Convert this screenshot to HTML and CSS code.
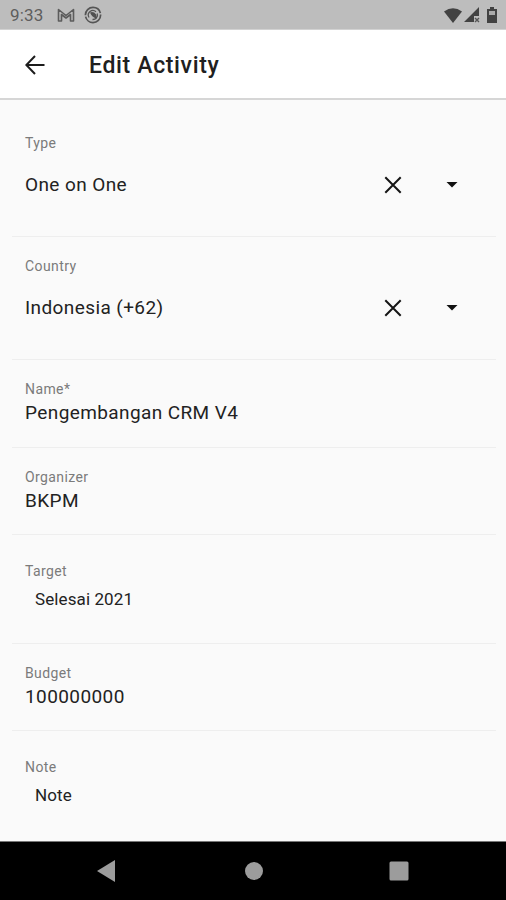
FILE: index.html
```
<!DOCTYPE html>
<html lang="en">
  <head>
    <meta charset="UTF-8" />
    <meta name="viewport" content="width=device-width, initial-scale=1.0" />
    <title>Edit Activity</title>
    <link rel="stylesheet" href="styles.css">
  </head>
  <body>
    <div class="status-bar">
      <span class="time">9:33</span>
      <svg class="mail-icon" width="18" height="14" viewBox="0 0 18 14">
        <path d="M1.5 13V1.5L9 7.5l7.5-6V13h-3V6.5L9 10 4.5 6.5V13z" fill="none" stroke="#5c5c5c" stroke-width="1.6" stroke-linejoin="round" />
      </svg>
      <svg class="app-icon" width="18" height="18" viewBox="0 0 18 18">
        <circle cx="9" cy="9" r="7.6" fill="none" stroke="#555" stroke-width="1.7" stroke-dasharray="22 1.5" />
        <path d="M5 11.5a4.6 4.6 0 0 1 7-5.8M13.2 7.5a4.6 4.6 0 0 1-4.7 6" fill="none" stroke="#555" stroke-width="1.3" />
        <path d="M6 6.5Q9.5 5 12.2 8.5L12.6 12.5Q8 11.5 6 6.5z" fill="#505050" />
      </svg>
      <div class="system-icons">
        <svg width="18" height="15" viewBox="0 0 18 15">
          <path d="M0 3.5Q9-3 18 3.5L9 15z" fill="#424242" />
        </svg>
        <svg class="signal" width="16" height="16" viewBox="0 0 16 16">
          <path d="M15 0v9h-5v6H0z" fill="#424242" />
          <path d="M11 11l4 4M15 11l-4 4" stroke="#555" stroke-width="1.4" />
        </svg>
        <svg class="battery" width="10" height="16" viewBox="0 0 10 16">
          <path d="M3 0h4v2h3v14H0V2h3z" fill="#424242" />
          <path d="M2 4h6v4H2z" fill="#aaa" />
        </svg>
      </div>
    </div>

    <header class="app-bar">
      <svg class="back" width="20" height="20" viewBox="0 0 20 20">
        <path d="M19.5 10H1.8M10 1L1.3 10 10 19" fill="none" stroke="#1c1c1c" stroke-width="2" />
      </svg>
      <h1>Edit Activity</h1>
    </header>

    <main class="form">
      <div class="field select first">
        <label>Type</label>
        <div class="select-row">
          <span class="value">One on One</span>
          <svg class="clear" width="18" height="18" viewBox="0 0 18 18">
            <path d="M1.3 1.3l15.4 15.4M16.7 1.3L1.3 16.7" stroke="#151515" stroke-width="2" />
          </svg>
          <svg class="caret" width="12" height="6" viewBox="0 0 12 6">
            <path d="M0.5 0h11L6 5.5z" fill="#111" />
          </svg>
        </div>
      </div>
      <div class="field select">
        <label>Country</label>
        <div class="select-row">
          <span class="value">Indonesia (+62)</span>
          <svg class="clear" width="18" height="18" viewBox="0 0 18 18">
            <path d="M1.3 1.3l15.4 15.4M16.7 1.3L1.3 16.7" stroke="#151515" stroke-width="2" />
          </svg>
          <svg class="caret" width="12" height="6" viewBox="0 0 12 6">
            <path d="M0.5 0h11L6 5.5z" fill="#111" />
          </svg>
        </div>
      </div>
      <div class="field name">
        <label>Name*</label>
        <span class="value">Pengembangan CRM V4</span>
      </div>
      <div class="field">
        <label>Organizer</label>
        <span class="value">BKPM</span>
      </div>
      <div class="field area">
        <label>Target</label>
        <span class="value">Selesai 2021</span>
      </div>
      <div class="field">
        <label>Budget</label>
        <span class="value">100000000</span>
      </div>
      <div class="field area note">
        <label>Note</label>
        <span class="value">Note</span>
      </div>
    </main>

    <nav class="nav-bar">
      <svg width="18" height="22" viewBox="0 0 18 22">
        <path d="M18 0v22L0 11z" fill="#9c9c9c" />
      </svg>
      <svg class="home" width="18" height="18" viewBox="0 0 18 18">
        <circle cx="9" cy="9" r="9" fill="#9c9c9c" />
      </svg>
      <svg width="20" height="20" viewBox="0 0 20 20">
        <rect x="0.5" y="0.5" width="19" height="19" rx="1.5" fill="#9c9c9c" />
      </svg>
    </nav>
  </body>
</html>
```
FILE: styles.css
```
* {
  box-sizing: border-box;
}
body {
  margin: 0;
  height: 900px;
  display: flex;
  flex-direction: column;
  overflow: hidden;
  background: #fafafa;
  color: #222;
  font-family: Roboto, sans-serif;
}
svg {
  display: block;
  flex: none;
}
.status-bar {
  display: flex;
  align-items: center;
  height: 30px;
  padding: 1px 9px 0 10px;
  background: #bdbdbd;
  border-bottom: 1px solid #d2d2d2;
}
.time {
  width: 47px;
  font-size: 17px;
  letter-spacing: 0.2px;
  color: #5e5e5e;
}
.app-icon {
  margin-left: 9px;
}
.system-icons {
  display: flex;
  align-items: center;
  margin-left: auto;
}
.signal {
  margin-left: 2px;
}
.battery {
  margin-left: 7px;
}
.app-bar {
  display: flex;
  align-items: center;
  height: 70px;
  padding: 1px 0 0 25px;
  background: #fff;
  border-bottom: 2px solid #d6d6d6;
}
.app-bar h1 {
  margin: 2px 0 0 44px;
  font-size: 23px;
  font-weight: 500;
  letter-spacing: 0.65px;
  color: #202020;
}
.form {
  flex: 1;
  padding: 0 10px 0 12px;
}
.field {
  display: flex;
  flex-direction: column;
  height: 87px;
  padding: 20px 13px 0;
  border-bottom: 1px solid #eeeeee;
}
.field label {
  font-size: 14px;
  line-height: 18px;
  letter-spacing: 0.4px;
  color: #7b7b7b;
}
.value {
  margin-top: 3px;
  font-size: 19px;
  line-height: 24px;
  letter-spacing: 0.4px;
}
.select {
  height: 123px;
}
.first {
  height: 137px;
  padding-top: 34px;
}
.select-row {
  display: flex;
  align-items: center;
  margin-top: 21px;
  padding-right: 25px;
}
.select-row .value {
  flex: 1;
  margin: 0;
}
.caret {
  margin-left: 44px;
}
.name {
  height: 88px;
}
.area {
  height: 109px;
  padding-top: 27px;
}
.area .value {
  margin: 7px 0 0 10px;
  font-size: 17px;
  letter-spacing: 0.1px;
}
.note {
  height: 110px;
  border-bottom: 0;
}
.nav-bar {
  display: flex;
  align-items: center;
  justify-content: space-between;
  height: 59px;
  padding: 0 97px;
  background: #000;
  border-top: 1px solid #777;
}
.home {
  margin-left: 3px;
}
```
